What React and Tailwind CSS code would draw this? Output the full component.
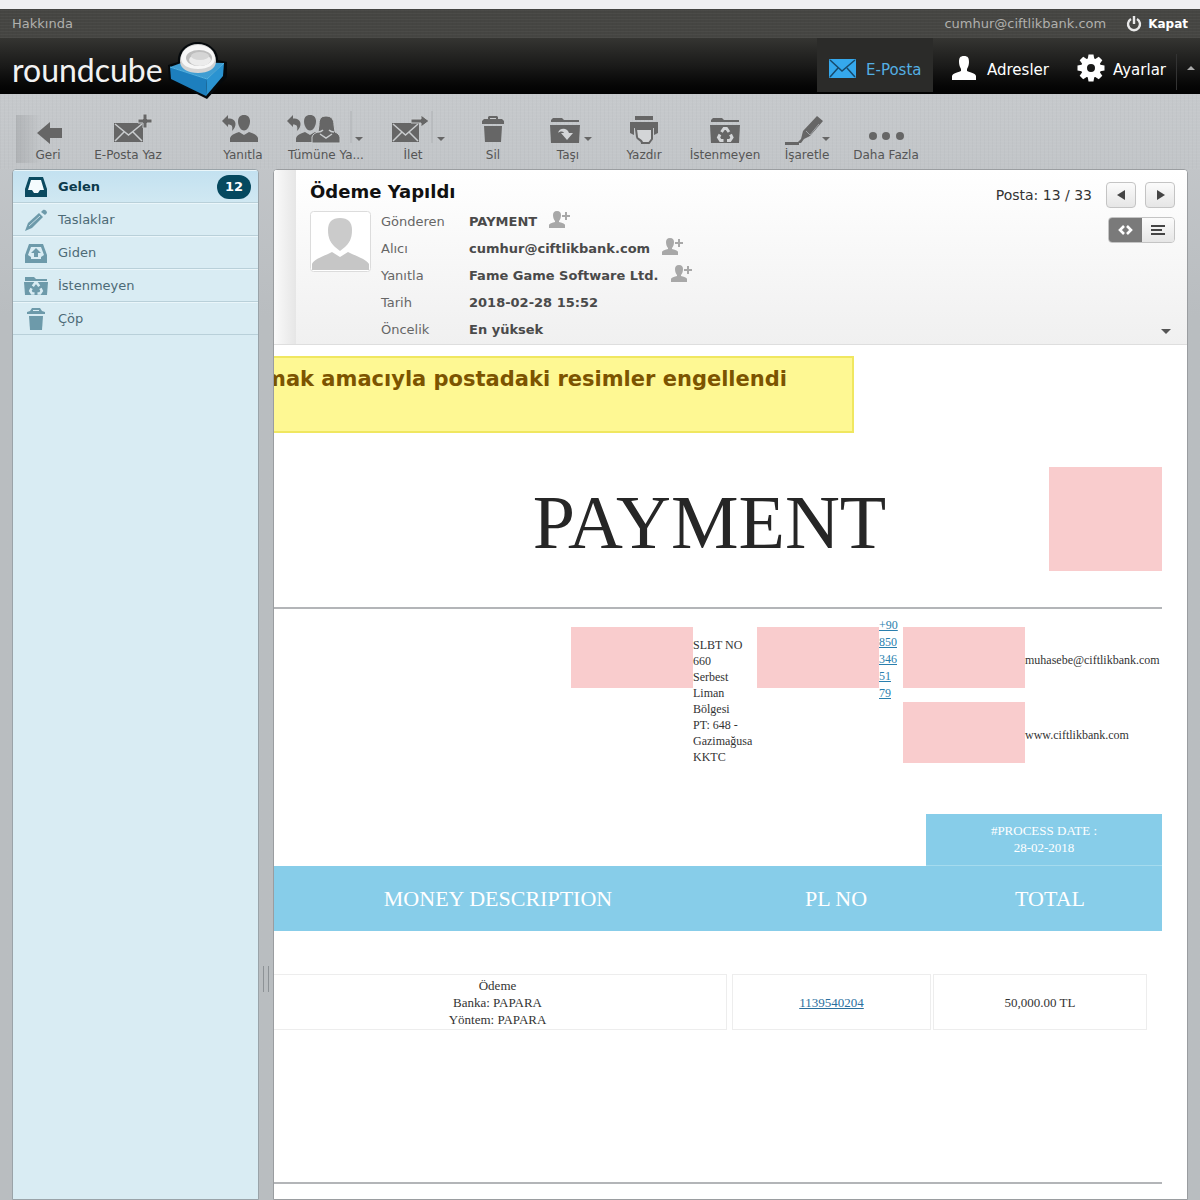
const FOLDERS = [
    { name: "Gelen", icon: "inbox", unread: 12 },
    { name: "Taslaklar", icon: "pencil" },
    { name: "Giden", icon: "sent" },
    { name: "İstenmeyen", icon: "junk" },
    { name: "Çöp", icon: "trash" },
];

const HEADERS = [
    { label: "Gönderen", value: "PAYMENT", contact: true },
    { label: "Alıcı", value: "cumhur@ciftlikbank.com", contact: true },
    { label: "Yanıtla", value: "Fame Game Software Ltd.", contact: true },
    { label: "Tarih", value: "2018-02-28 15:52" },
    { label: "Öncelik", value: "En yüksek" },
];

const ADDRESS = ["SLBT NO", "660", "Serbest", "Liman", "Bölgesi", "PT: 648 -", "Gazimağusa", "KKTC"];
const PHONE = ["+90", "850", "346", "51", "79"];

const LINEN = "bg-[repeating-linear-gradient(0deg,rgba(255,255,255,0.03)_0px,rgba(255,255,255,0.03)_1px,transparent_1px,transparent_3px),repeating-linear-gradient(90deg,rgba(0,0,0,0.02)_0px,rgba(0,0,0,0.02)_1px,transparent_1px,transparent_4px)]";

/* shared drawing parts */

function Man({ x, y = 0 }) {
    return (
        <g transform={`translate(${x} ${y})`}>
            <path d="M14 0c4 0 6 2.500 6 6.500c0 4-2.500 9-6 9s-6-5-6-9C8 2.500 10 0 14 0z" />
            <path d="M0 27v-4c1-3 4-4.500 9-6l5 3 5-3c5 1.500 8 3 9 6v4z" />
        </g>
    );
}

function ReplyArrow({ x }) {
    return <path transform={`translate(${x} 0)`} d="M0 6L6 0v3.500c5 0 7.500 2 7.500 5.500 0 2.500-1 4.500-3.500 7 1-4.500 0-6.500-4-6.500V12z" />;
}

function Envelope({ x, y, w = 29, line = "#c9ccce" }) {
    return (
        <g transform={`translate(${x} ${y})`}>
            <rect width={w} height="19" />
            <path d={`M1 1l${w / 2 - 1} 11L${w - 1} 1M1 18l9-9M${w - 1} 18l-9-9`} fill="none" stroke={line} strokeWidth="1.5" />
        </g>
    );
}

function Caret({ x, y = 22 }) {
    return <path d={`M${x} ${y}h8l-4 4z`} />;
}

function Recycle({ x, y, color }) {
    return (
        <g transform={`translate(${x} ${y})`} fill="none" stroke={color} strokeWidth="3">
            <path d="M4.500 5L7 1.500h2.500L12 5" />
            <path d="M13.500 7.500l1.500 3-2 3h-3" />
            <path d="M6.500 13.500h-3l-2-3 1.500-3" />
        </g>
    );
}

function FolderShape({ x }) {
    return (
        <g transform={`translate(${x} 3)`}>
            <path d="M0 4V2l2-2h9l2 2h15v2z" />
            <path d="M-1 7h30l-1 18H0z" />
        </g>
    );
}

const TOOL_ICONS = {
    back: <path d="M21 18L34 7v6h12v10H34v6z" />,
    compose: (
        <>
            <Envelope x={18} y={8} />
            <path d="M47-1h4v5h5v4h-5v5h-4V8h-5V4h5z" stroke="#c9ccce" strokeWidth="1" />
        </>
    ),
    reply: (
        <>
            <ReplyArrow x={11} />
            <Man x={19} />
        </>
    ),
    replyAll: (
        <>
            <ReplyArrow x={1} />
            <Man x={10} />
            <path d="M40 1c6 0 8 4 8 9l1 7c2 1 4 2 5 5v6H26v-6c1-3 3-4 6-5l1-7c0-5 1-9 7-9z" stroke="#c9ccce" strokeWidth="1" />
            <path d="M34 19l6 4 6-4M32 17c3 0 4-1 5-2M48 17c-3 0-4-1-5-2" fill="none" stroke="#c9ccce" strokeWidth="1.5" />
            <path d="M65-4v32" stroke="#aeb1b4" />
            <Caret x={69} />
        </>
    ),
    forward: (
        <>
            <Envelope x={11} y={8} w={27} />
            <path d="M30 4h10V0l8 6-8 6V8H30z" stroke="#c9ccce" strokeWidth="1" />
            <path d="M51-4v32" stroke="#aeb1b4" />
            <Caret x={56} />
        </>
    ),
    trash: (
        <>
            <path d="M21 9V6l2-2h4V2l1-1h8l1 1v2h4l2 2v3z" />
            <path d="M23 11h18l-1 16H24z" />
            <path d="M29 4h6V3h-6z" fill="#c9ccce" />
        </>
    ),
    move: (
        <>
            <FolderShape x={15} />
            <path d="M22 18c1-5 9-6 11 0h4l-6 7-6-7h3c-1-2-4-2-6 0z" fill="#d3d5d7" />
            <Caret x={48} />
        </>
    ),
    print: (
        <>
            <path d="M23 1h18v4H23z" />
            <path d="M18 7h28v11l-4 2V13H22v7l-4-2z" />
            <path d="M24 14h16v10l-3 4h-7c0-4-5-3-5-6z" fill="#d3d5d7" stroke="#666" strokeWidth="2" />
        </>
    ),
    junk: (
        <>
            <FolderShape x={18} />
            <Recycle x={24} y={12} color="#d3d5d7" />
        </>
    ),
    mark: (
        <>
            <path d="M10 27h14v3H10z" />
            <path d="M26 24l2-8L42 1l6 5-13 15-6 3-3 4h-4z" />
            <path d="M31 16l4 4L44 9" fill="none" stroke="#9fa2a5" />
            <Caret x={47} />
        </>
    ),
    more: (
        <>
            <circle cx="19" cy="21" r="4" />
            <circle cx="32" cy="21" r="4" />
            <circle cx="46" cy="21" r="4" />
        </>
    ),
};

const TOOLS = [
    { label: "Geri", icon: "back", width: "w-16 bg-linear-to-r from-black/10 to-transparent to-40%" },
    { label: "E-Posta Yaz", icon: "compose", width: "w-24 mr-8" },
    { label: "Yanıtla", icon: "reply", width: "w-[70px]" },
    { label: "Tümüne Ya...", icon: "replyAll", width: "w-24", wide: true },
    { label: "İlet", icon: "forward", width: "w-[78px]" },
    { label: "Sil", icon: "trash", width: "w-[82px]" },
    { label: "Taşı", icon: "move", width: "w-[68px]" },
    { label: "Yazdır", icon: "print", width: "w-[84px]" },
    { label: "İstenmeyen", icon: "junk", width: "w-[78px]" },
    { label: "İşaretle", icon: "mark", width: "w-[86px]" },
    { label: "Daha Fazla", icon: "more", width: "w-[72px]" },
];

const FOLDER_ICONS = {
    inbox: (
        <>
            <path d="M4 1h14l4 12v8H0v-8z" />
            <path d="M6 4h10l3 10h-4l-2 3H9l-2-3H3z" fill="#f4fbfe" />
        </>
    ),
    pencil: (
        <>
            <path d="M0 22l3-8L14 4l4 4L7 19z" />
            <path d="M16 3l2-2c2-1 4 1 4 3l-2 2z" />
            <path d="M4 17L15 7" stroke="#c6dde5" strokeWidth="1" />
        </>
    ),
    sent: (
        <>
            <path d="M4 2h14l4 11v8H0v-8z" />
            <path d="M6 5h10l3 8-3 2v2H6v-2l-3-2z" fill="#d9ecf3" />
            <path d="M11 6l5 5h-3v4H9v-4H6z" />
        </>
    ),
    junk: (
        <>
            <path d="M0 5V2h9l2 2h11v2H0z" />
            <path d="M-1 7h24l-1 13H0z" />
            <g transform="translate(4 7) scale(0.850)">
                <Recycle x={0} y={0} color="#d9ecf3" />
            </g>
        </>
    ),
    trash: (
        <>
            <path d="M2 6V4l3-1 2-3h8l2 3 3 1v2z" />
            <path d="M4 8h14l-1 14H5z" />
            <path d="M8 3h6V2H8z" fill="#d9ecf3" />
        </>
    ),
};

function CubeLogo() {
    return (
        <svg width="60" height="58" viewBox="0 0 60 58" className="relative z-10 shrink-0">
            <path d="M1 23l10-3C10 8 20 0 31 0s21 9 20 18l9 2v15L40 57 2 38z" fill="#05090c" />
            <path d="M3 25l14-5 40 1-17 16z" fill="#3f9dd2" />
            <path d="M3 25l37 12-1 17L4 37z" fill="#1d7fbe" />
            <path d="M57 21l-1 13-17 20 1-17z" fill="#2a93d1" />
            <path d="M3 25l37 12 17-16" fill="none" stroke="#55b4e4" />
            <path d="M13 19C13 9 21 2 31 2s18 7 18 17c0 8-8 12-18 12s-18-4-18-12z" fill="#d4d4d4" />
            <path d="M14 16C15 8 22 3 31 3s16 5 17 13c0 7-7 11-17 11S14 23 14 16z" fill="#f7f7f7" />
            <ellipse cx="32" cy="16" rx="13" ry="8" fill="#bdbdbd" />
            <ellipse cx="33" cy="18" rx="11" ry="6" fill="#ececec" />
            <ellipse cx="33" cy="14" rx="9" ry="4" fill="#d5d5d5" />
        </svg>
    );
}

function TopBar() {
    return (
        <div className={`h-[29px] flex items-center justify-between pl-3 pr-3 bg-[#454542] text-[13px] text-[#b0b0ad] ${LINEN}`}>
            <a href="#about">Hakkında</a>
            <div className="flex items-center">
                <span className="mr-5">cumhur@ciftlikbank.com</span>
                <a href="#logout" className="flex items-center gap-[6px] text-xs font-bold text-white">
                    <svg width="16" height="16" viewBox="0 0 16 16" fill="none" stroke="#e8e8e8" strokeWidth="2.4">
                        <path d="M5 3a6 6 0 1 0 6 0M8 0v8" />
                    </svg>
                    Kapat
                </a>
            </div>
        </div>
    );
}

function Header() {
    return (
        <header className="h-14 flex justify-between bg-linear-to-b from-[#353532] via-[#1a1a19] to-[#020202] text-[15px] text-white">
            <a href="#home" className="flex items-start pl-3 pt-1">
                <span className="pt-2 w-[155px] font-['Lato'] text-[32px] leading-[40px] text-[#f2f2f2]">roundcube</span>
                <CubeLogo />
            </a>
            <nav className="flex items-start">
                <a href="#mail" className="h-[54px] w-[116px] pl-3 pt-[10px] flex items-center gap-[10px] bg-[#2b2b29] text-[#54afe3]">
                    <svg width="27" height="19" viewBox="0 0 27 19" fill="#35a8ec" className="mb-1">
                        <rect width="27" height="19" rx="1" />
                        <path d="M1 1l12 11L26 1M1 18l8-9M26 18l-8-9" fill="none" stroke="#17496b" strokeWidth="1.5" />
                    </svg>
                    <span>E-Posta</span>
                </a>
                <a href="#contacts" className="h-[54px] pl-[18px] pt-[10px] flex items-center gap-[10px]">
                    <svg width="26" height="26" viewBox="0 0 26 26" fill="#fff" className="mb-1">
                        <path d="M13 1c4 0 5 2 5 6 0 3-1 5-2 7v2c5 2 8 2 9 5v4H1v-4c1-3 4-3 9-5v-2c-1-2-2-4-2-7 0-4 1-6 5-6z" />
                    </svg>
                    <span>Adresler</span>
                </a>
                <a href="#settings" className="h-[54px] pl-7 pt-[10px] flex items-center gap-2">
                    <svg width="28" height="28" viewBox="-14 -14 28 28" fill="#fff" className="mb-1">
                        <circle r="7" fill="none" stroke="#fff" strokeWidth="6" />
                        {[0, 45, 90, 135, 180, 225, 270, 315].map((a) => (
                            <path key={a} d="M-3.500-8l1-5.500h5l1 5.500z" transform={`rotate(${a})`} />
                        ))}
                    </svg>
                    <span>Ayarlar</span>
                </a>
                <button aria-label="Menü" className="h-9 mt-4 ml-[10px] w-6 pl-1 flex items-center justify-center border-l border-[#333]">
                    <svg width="8" height="4" viewBox="0 0 8 4" fill="#aaa" className="mb-2">
                        <path d="M0 4l4-4 4 4z" />
                    </svg>
                </button>
            </nav>
        </header>
    );
}

function Toolbar() {
    return (
        <div className={`flex pt-[21px] pb-[6px] pl-4 ${LINEN}`}>
            {TOOLS.map((t) => (
                <button key={t.label} className={`${t.width} shrink-0 flex flex-col items-center gap-[2px] text-xs leading-4 text-[#555]`}>
                    <svg
                        width={t.wide ? 80 : 64}
                        height="30"
                        viewBox={t.wide ? "0 0 80 30" : "0 0 64 30"}
                        fill="#666"
                        className="shrink-0 overflow-visible"
                    >
                        {TOOL_ICONS[t.icon]}
                    </svg>
                    <span className="whitespace-nowrap">{t.label}</span>
                </button>
            ))}
        </div>
    );
}

function Sidebar() {
    return (
        <aside className="w-[247px] shrink-0 rounded-t border border-[#9aa3a8] bg-[#d9ecf3] overflow-hidden">
            <ul>
                {FOLDERS.map((f) => (
                    <li key={f.name}>
                        <a
                            href={`#${f.icon}`}
                            className={`h-[33px] flex items-center pl-3 pr-[7px] border-b border-b-[#b9d0d9] border-t border-t-[#eaf6fa] text-[13px] ${f.unread ? "bg-linear-to-b from-[#c3e1f0] to-[#d0e8f2] font-bold text-[#0c3a4c]" : "text-[#4c6a76]"}`}
                        >
                            <svg width="22" height="22" viewBox="0 0 22 22" fill={f.unread ? "#0b4a60" : "#6d9aaa"} className="overflow-visible">
                                {FOLDER_ICONS[f.icon]}
                            </svg>
                            <span className="ml-[11px] flex-1">{f.name}</span>
                            {f.unread && <span className="w-[34px] rounded-full bg-[#06495f] text-center leading-6 text-white">{f.unread}</span>}
                        </a>
                    </li>
                ))}
            </ul>
        </aside>
    );
}

function AddContact() {
    return (
        <button aria-label="Kişi ekle" className="ml-3 mb-1">
            <svg width="22" height="17" viewBox="0 0 22 17" fill="#a8a8a8">
                <path d="M8 0c3 0 4 2 4 4 0 3-1 5-2 6v1c4 1 6 2 6 3v3H0v-3c0-1 2-2 6-3v-1C5 9 4 7 4 4c0-2 1-4 4-4z" />
                <path d="M16 1h2v3h3v2h-3v3h-2V6h-3V4h3z" />
            </svg>
        </button>
    );
}

function MessageHeader() {
    const btn = "h-[26px] w-[30px] flex items-center justify-center rounded border border-[#c4c4c4] bg-linear-to-b from-[#fbfbfb] to-[#e6e6e6]";

    return (
        <div className="flex h-[175px] border-b border-[#dedede] bg-linear-to-b from-white to-[#f0f0f0]">
            <div className="w-[22px] shrink-0 bg-linear-to-r from-[#fafafa] to-[#e6e6e6]" />
            <div className="flex-1 pl-[14px] pt-[9px]">
                <h2 className="text-lg leading-[26px] font-bold text-[#111]">Ödeme Yapıldı</h2>
                <div className="flex pt-[3px]">
                    <svg width="61" height="61" viewBox="0 0 61 61" className="mt-[3px] shrink-0">
                        <rect x="0.5" y="0.5" width="60" height="60" rx="3" fill="#fff" stroke="#dcdcdc" />
                        <path d="M30 7c8 0 12 4 12 12 0 9-3 13-7 17l-5 4-5-4c-4-4-7-8-7-17 0-8 4-12 12-12z" fill="#cbcbcb" />
                        <path d="M2 59v-6c2-5 10-7 20-12l8 5 8-5c10 5 18 7 21 12v6z" fill="#c6c6c6" />
                    </svg>
                    <table className="ml-[10px] text-[13px]">
                        <tbody>
                            {HEADERS.map((h) => (
                                <tr key={h.label} className="h-[27px]">
                                    <th className="w-[88px] p-0 text-left font-normal text-[#666]">{h.label}</th>
                                    <td className="p-0 font-bold text-[#4a4a4a]">
                                        <div className="flex items-center">
                                            {h.value}
                                            {h.contact && <AddContact />}
                                        </div>
                                    </td>
                                </tr>
                            ))}
                        </tbody>
                    </table>
                </div>
            </div>
            <div className="flex flex-col items-end pt-3 pr-3">
                <div className="flex items-center">
                    <span className="mr-[14px] text-sm text-[#333]">Posta: 13 / 33</span>
                    <button aria-label="Önceki" className={btn}>
                        <svg width="9" height="10" viewBox="0 0 9 10" fill="#444"><path d="M8 0v10L0 5z" /></svg>
                    </button>
                    <button aria-label="Sonraki" className={`${btn} ml-[9px]`}>
                        <svg width="9" height="10" viewBox="0 0 9 10" fill="#444"><path d="M1 0v10l8-5z" /></svg>
                    </button>
                </div>
                <div className="mt-[9px] flex h-[26px] w-[67px] overflow-hidden rounded border border-[#c4c4c4]">
                    <button aria-label="HTML" className="flex-1 flex items-center justify-center bg-[#7a7a7a]">
                        <svg width="17" height="10" viewBox="0 0 17 10" fill="none" stroke="#fff" strokeWidth="2.600">
                            <path d="M7 1L3 5l4 4M10 1l4 4-4 4" />
                        </svg>
                    </button>
                    <button aria-label="Düz metin" className="flex-1 flex items-center justify-center bg-linear-to-b from-[#fbfbfb] to-[#e6e6e6]">
                        <svg width="14" height="10" viewBox="0 0 14 10" fill="#444">
                            <path d="M0 0h14v2H0zM0 4h11v2H0zM0 8h14v2H0z" />
                        </svg>
                    </button>
                </div>
                <button aria-label="Ayrıntılar" className="mt-auto mb-[10px] mr-1">
                    <svg width="10" height="5" viewBox="0 0 10 5" fill="#555"><path d="M0 0h10L5 5z" /></svg>
                </button>
            </div>
        </div>
    );
}

function BlockedImage({ className = "h-[61px] w-[122px]" }) {
    return <div className={`shrink-0 bg-[#f9cccd] ${className}`} />;
}

function Contacts() {
    return (
        <div className="flex justify-end pt-2 h-[197px] text-xs text-[#333]">
            <BlockedImage className="mt-[10px] h-[61px] w-[122px]" />
            <address className="mt-5 w-16 leading-4 not-italic">
                {ADDRESS.map((line) => <div key={line}>{line}</div>)}
            </address>
            <BlockedImage className="mt-[10px] h-[61px] w-[122px]" />
            <a href="tel:+908503465179" className="w-6 leading-[17px] text-[#2a7fae] underline">
                {PHONE.map((part) => <span key={part} className="block">{part}</span>)}
            </a>
            <div className="mt-[10px] flex flex-col gap-[14px]">
                <div className="flex items-center">
                    <BlockedImage />
                    <span className="w-[137px] pt-1 leading-4">muhasebe@ciftlikbank.com</span>
                </div>
                <div className="flex items-center">
                    <BlockedImage />
                    <span className="w-[137px] pt-1 leading-4">www.ciftlikbank.com</span>
                </div>
            </div>
        </div>
    );
}

function MessageBody() {
    return (
        <div className="-ml-3 mr-[25px] flex flex-col font-['Liberation_Serif',serif]">
            <div className="flex pt-[34px]">
                <h1 className="flex-1 pl-[108px] pt-[15px] text-center text-[76px] leading-[80px] text-[#262626]">PAYMENT</h1>
                <BlockedImage className="h-[104px] w-[113px]" />
            </div>
            <hr className="mt-[36px] border-t-2 border-[#b3b5b8]" />
            <Contacts />
            <p className="mt-[8px] w-[236px] self-end border-b border-[#a5dbee] bg-[#87cde9] pt-2 pb-[9px] text-center text-[13px] leading-[17px] text-white">
                #PROCESS DATE :<br />
                28-02-2018
            </p>
            <table className="w-full table-fixed">
                <thead>
                    <tr className="h-[65px] bg-[#87cde9] text-[22px] text-white">
                        <th className="font-normal">MONEY DESCRIPTION</th>
                        <th className="w-[204px] font-normal">PL NO</th>
                        <th className="w-[224px] font-normal">TOTAL</th>
                    </tr>
                </thead>
            </table>
            <div className="mt-[43px] ml-[6px] mr-[15px]">
                <table className="w-full table-fixed text-[13px] leading-[17px] text-[#333]">
                    <tbody>
                        <tr className="h-[55px] text-center">
                            <td className="border border-[#ededed]">
                                Ödeme<br />
                                Banka: PAPARA<br />
                                Yöntem: PAPARA
                            </td>
                            <td className="w-[6px]" />
                            <td className="w-[198px] border border-[#ededed]">
                                <a href="#pl" className="text-[#2a6f9e] underline">1139540204</a>
                            </td>
                            <td className="w-[3px]" />
                            <td className="w-[213px] border border-[#ededed]">50,000.00 TL</td>
                        </tr>
                    </tbody>
                </table>
            </div>
            <hr className="mt-[152px] border-t-2 border-[#b3b5b8]" />
        </div>
    );
}

export default function App() {
    return (
        <div className="h-screen flex flex-col overflow-hidden bg-[#f0f0f2] pt-[9px] font-['DejaVu_Sans',Verdana,sans-serif]">
            <TopBar />
            <Header />
            <div className="flex-1 min-h-0 flex flex-col bg-linear-to-b from-[#c6c9cc] to-[#b9bdc0] to-20%">
                <Toolbar />
                <div className="flex-1 min-h-0 flex pl-3 pr-3">
                    <Sidebar />
                    <div className="w-[14px] shrink-0 flex justify-center pt-[797px]">
                        <div className="h-[26px] w-[6px] border-x border-[#8d9296]" />
                    </div>
                    <main className="flex-1 min-w-0 rounded-t border border-[#9a9da0] bg-white overflow-hidden">
                        <MessageHeader />
                        <div className="mt-[11px] h-[77px] w-[580px] max-w-full overflow-hidden border-2 border-l-0 border-[#f0e760] bg-[#fef893] pt-2">
                            <p className="-ml-[10px] whitespace-nowrap text-[21px] leading-[26px] font-bold text-[#7c5400]">
                                mak amacıyla postadaki resimler engellendi
                            </p>
                        </div>
                        <MessageBody />
                    </main>
                </div>
            </div>
        </div>
    );
}
